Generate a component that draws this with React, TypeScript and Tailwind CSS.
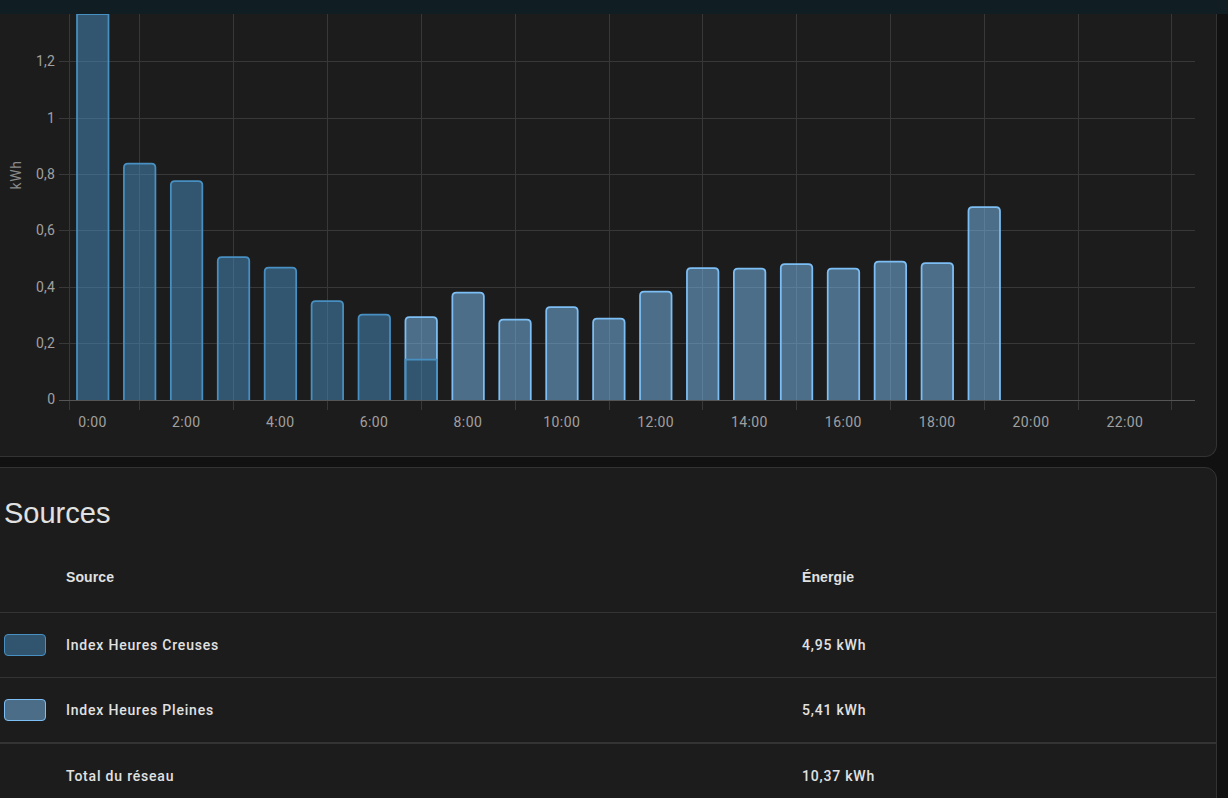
const tops = [14, 163.5, 181, 257, 267.5, 301, 314.5, 359, 292.5, 319.5, 307, 318.5, 291.5, 268, 268.5, 264, 268.5, 261.5, 263, 207];
const dark = '#488fc2';
const light = '#7dbff5';
const gridX = [139.5, 233.5, 327.5, 421.5, 515.5, 609.5, 702.5, 796.5, 890.5, 984.5, 1078.5, 1171.5];
const gridY: [number, string][] = [[61.5, '1,2'], [118.5, '1'], [174.5, '0,8'], [230.5, '0,6'], [287.5, '0,4'], [343.5, '0,2']];
const hours = ['0:00', '2:00', '4:00', '6:00', '8:00', '10:00', '12:00', '14:00', '16:00', '18:00', '20:00', '22:00'];

function bar(x: number, top: number, bottom: number, rounded: boolean) {
  const l = x + 0.5;
  const r = x + 32;
  if (rounded) {
    return `M${l} ${bottom}V${top + 4}Q${l} ${top} ${l + 4} ${top}H${r - 4}Q${r} ${top} ${r} ${top + 4}V${bottom}`;
  }
  return `M${l} ${bottom}V${top}H${r}V${bottom}`;
}

function Chart() {
  return (
    <svg viewBox="0 14 1216 443" className="block w-[1216px] h-[443px]" style={{ fontFamily: 'Roboto, sans-serif' }}>
      {gridY.map(([y, label]) => (
        <g key={label}>
          <line x1={59} x2={1195} y1={y} y2={y} stroke="#383838" />
          <text x={55} y={y + 4.5} textAnchor="end" fontSize={14} letterSpacing={0.2} fill="#a0a0a0">{label}</text>
        </g>
      ))}
      <text x={55} y={403.5} textAnchor="end" fontSize={14} fill="#a0a0a0">0</text>
      <line x1={69.5} x2={69.5} y1={14} y2={410} stroke="#383838" />
      {gridX.map((x) => (
        <line key={x} x1={x} x2={x} y1={14} y2={410} stroke="#383838" />
      ))}
      {tops.map((top, i) => {
        const x = 76.5 + i * 46.92;
        const isDark = i <= 7;
        const isLight = i >= 7;
        if (i === 7) {
          return (
            <g key={i}>
              <path d={bar(x, 317, 359.5, true) + 'Z'} fill={light} fillOpacity={0.5} stroke="none" />
              <path d={bar(x, 317, 400, true)} fill="none" stroke={light} strokeWidth={1.75} />
              <rect x={x + 0.5} y={359.5} width={31.5} height={41} fill={dark} fillOpacity={0.5} />
              <path d={bar(x, 359.5, 400, false)} fill="none" stroke={dark} strokeWidth={1.75} />
            </g>
          );
        }
        const colour = isDark && !isLight ? dark : light;
        return (
          <g key={i}>
            <path d={bar(x, top, 400, i !== 0) + 'Z'} fill={colour} fillOpacity={0.5} stroke="none" />
            <path d={bar(x, top, 400, i !== 0)} fill="none" stroke={colour} strokeWidth={1.75} />
          </g>
        );
      })}
      <line x1={59} x2={1195} y1={400.5} y2={400.5} stroke="#555555" />
      <text x={0} y={0} transform="translate(20.5 175) rotate(-90)" textAnchor="middle" fontSize={14} letterSpacing={0.6} fill="#8a8a8a">kWh</text>
      {hours.map((h, i) => (
        <text key={h} x={92.5 + i * 93.85} y={427} textAnchor="middle" fontSize={14} letterSpacing={0.4} fill="#a0a0a0">{h}</text>
      ))}
    </svg>
  );
}

function Swatch({ tone }: { tone: 'dark' | 'light' }) {
  return (
    <div
      className={
        tone === 'dark'
          ? 'w-[42px] h-[22px] rounded-[4px] border border-[#488fc2] bg-[#32556f]'
          : 'w-[42px] h-[22px] rounded-[4px] border border-[#7dbff5] bg-[#4c6d88]'
      }
    />
  );
}

function Row({ swatch, name, value, border }: { swatch?: 'dark' | 'light'; name: string; value: string; border: string }) {
  return (
    <div className={`flex items-center font-medium ${border}`}>
      <div className="w-[62px] shrink-0 flex items-center">{swatch && <Swatch tone={swatch} />}</div>
      <div className="w-[736px] shrink-0">{name}</div>
      <div>{value}</div>
    </div>
  );
}

export default function App() {
  return (
    <div className="h-[798px] w-[1228px] overflow-hidden bg-[#111111]">
      <div className="h-[14px] bg-[#101e24]" />
      <div className="w-[1233px] -ml-4">
        <div className="h-[443px] pl-4 bg-[#1c1c1c] border-r border-b border-l border-[#333333] rounded-br-[12px] overflow-hidden">
          <div className="-ml-px">
            <Chart />
          </div>
        </div>
        <div className="mt-[10px] h-[400px] bg-[#1c1c1c] border border-[#333333] rounded-t-[12px] text-[#e1e1e1] text-[14px] tracking-[0.8px]" style={{ fontFamily: 'Roboto, sans-serif' }}>
          <h2 className="pl-[19px] pt-[27px] h-[75px] text-[29px] leading-[36px] tracking-normal font-normal" style={{ fontFamily: '"Liberation Sans", sans-serif' }}>Sources</h2>
          <div className="flex items-center h-[70px] border-b border-[#333333] pl-[19px] font-bold tracking-[0.1px]" style={{ fontFamily: '"Liberation Sans", sans-serif' }}>
            <div className="w-[62px] shrink-0" />
            <div className="w-[736px] shrink-0">Source</div>
            <div>Énergie</div>
          </div>
          <Row swatch="dark" name="Index Heures Creuses" value="4,95 kWh" border="h-[65px] border-b border-[#333333] pl-[19px]" />
          <Row swatch="light" name="Index Heures Pleines" value="5,41 kWh" border="h-[66px] border-b-2 border-[#333333] pl-[19px]" />
          <Row name="Total du réseau" value="10,37 kWh" border="h-[64px] pl-[19px]" />
        </div>
      </div>
    </div>
  );
}
